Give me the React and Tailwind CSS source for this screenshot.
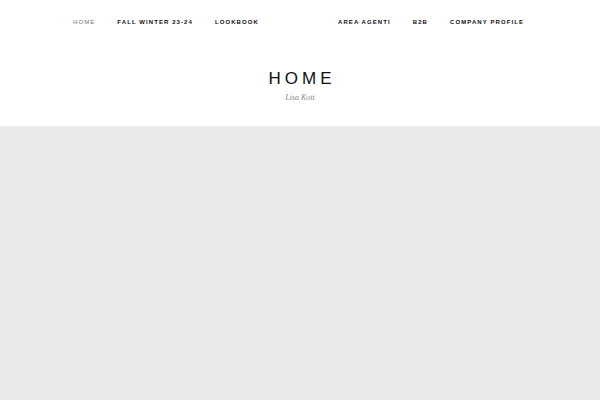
import React from "react";

const leftLinks = ["HOME", "FALL WINTER 23-24", "LOOKBOOK"];
const rightLinks = ["AREA AGENTI", "B2B", "COMPANY PROFILE"];

function NavLink({ label, active }) {
  return (
    <a
      href="#"
      className={
        "text-[6px] tracking-[0.18em] leading-none " +
        (active ? "text-[#777] font-normal" : "text-[#111] font-bold")
      }
    >
      {label}
    </a>
  );
}

export default function App() {
  return (
    <div className="w-[600px] h-[400px] flex flex-col bg-[#eaeaea]" style={{ fontFamily: '"Liberation Sans", Arial, sans-serif' }}>
      <header className="bg-white h-[126px] flex flex-col">
        <nav className="flex justify-between items-center h-[44px] pl-[73px] pr-[76px]">
          <div className="flex items-center gap-[22px]">
            {leftLinks.map((l, i) => (
              <NavLink key={l} label={l} active={i === 0} />
            ))}
          </div>
          <div className="flex items-center gap-[22px]">
            {rightLinks.map((l) => (
              <NavLink key={l} label={l} />
            ))}
          </div>
        </nav>
        <div className="flex flex-col items-center mt-[26px]">
          <h1 className="text-[17px] leading-none tracking-[0.24em] pl-[0.24em] text-[#111] font-medium">HOME</h1>
          <p className="mt-[5px] text-[8px] italic text-[#888]" style={{ fontFamily: '"Liberation Serif", "Times New Roman", serif' }}>
            Lisa Kott
          </p>
        </div>
      </header>
      <main className="flex-1" />
    </div>
  );
}
